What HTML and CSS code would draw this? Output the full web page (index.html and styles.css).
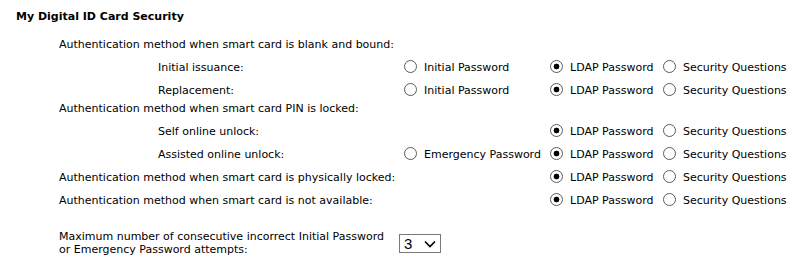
FILE: index.html
```html
<!DOCTYPE html>
<html>
<head>
<meta charset="utf-8">
<link rel="stylesheet" href="styles.css">
</head>
<body>
<div class="page">
  <div class="title">My Digital ID Card Security</div>
  <div class="grid">
    <div class="row">
      <div class="label">Authentication method when smart card is blank and bound:</div>
    </div>
    <div class="row">
      <div class="label sub">Initial issuance:</div>
      <label class="opt c1"><input type="radio" name="a"><span>Initial Password</span></label>
      <label class="opt c2"><input type="radio" name="a" checked><span>LDAP Password</span></label>
      <label class="opt c3"><input type="radio" name="a"><span>Security Questions</span></label>
    </div>
    <div class="row">
      <div class="label sub">Replacement:</div>
      <label class="opt c1"><input type="radio" name="b"><span>Initial Password</span></label>
      <label class="opt c2"><input type="radio" name="b" checked><span>LDAP Password</span></label>
      <label class="opt c3"><input type="radio" name="b"><span>Security Questions</span></label>
    </div>
    <div class="row head2">
      <div class="label">Authentication method when smart card PIN is locked:</div>
    </div>
    <div class="row">
      <div class="label sub">Self online unlock:</div>
      <label class="opt c2"><input type="radio" name="c" checked><span>LDAP Password</span></label>
      <label class="opt c3"><input type="radio" name="c"><span>Security Questions</span></label>
    </div>
    <div class="row">
      <div class="label sub">Assisted online unlock:</div>
      <label class="opt c1"><input type="radio" name="d"><span>Emergency Password</span></label>
      <label class="opt c2"><input type="radio" name="d" checked><span>LDAP Password</span></label>
      <label class="opt c3"><input type="radio" name="d"><span>Security Questions</span></label>
    </div>
    <div class="row">
      <div class="label">Authentication method when smart card is physically locked:</div>
      <label class="opt c2"><input type="radio" name="e" checked><span>LDAP Password</span></label>
      <label class="opt c3"><input type="radio" name="e"><span>Security Questions</span></label>
    </div>
    <div class="row">
      <div class="label">Authentication method when smart card is not available:</div>
      <label class="opt c2"><input type="radio" name="f" checked><span>LDAP Password</span></label>
      <label class="opt c3"><input type="radio" name="f"><span>Security Questions</span></label>
    </div>
  </div>
  <div class="maxrow">
    <div class="maxlabel">Maximum number of consecutive incorrect Initial Password<br>or Emergency Password attempts:</div>
    <div class="selwrap">
      <select class="sel"><option>3</option></select>
      <svg class="chev" width="12" height="8" viewBox="0 0 12 8"><path d="M1 1.5 L6 6.5 L11 1.5" fill="none" stroke="#000" stroke-width="1.6"/></svg>
    </div>
  </div>
</div>
</body>
</html>
```

FILE: styles.css
```css
html, body {
  margin: 0;
  padding: 0;
  background: #fff;
}
body {
  font-family: Verdana, "DejaVu Sans", sans-serif;
  font-size: 11px;
  color: #000;
}
.page {
  padding: 10px 0 0 16px;
}
.title {
  font-weight: bold;
  line-height: 13px;
  height: 13px;
}
.grid {
  margin-top: 10px;
  display: flex;
  flex-direction: column;
}
.row {
  display: grid;
  grid-template-columns: 388px 146px 113px auto;
  height: 23px;
  align-items: center;
  line-height: 13px;
}
.row.head2 {
  height: 18px;
  align-items: start;
}
.row.head2 .label {
  margin-top: 0px;
}
.label {
  grid-column: 1;
  padding-left: 43px;
  white-space: nowrap;
}
.label.sub {
  padding-left: 142px;
}
.opt {
  display: flex;
  align-items: center;
  white-space: nowrap;
}
.c1 { grid-column: 2; }
.c2 { grid-column: 3; }
.c3 { grid-column: 4; }
.opt input {
  appearance: none;
  -webkit-appearance: none;
  width: 13px;
  height: 13px;
  margin: -2px 7px 0 0;
  border: 1px solid #5a5a5a;
  border-radius: 50%;
  background: #fff;
  box-sizing: border-box;
  flex: none;
}
.opt input:checked {
  background: radial-gradient(circle, #000 0, #000 2.6px, #fff 3.2px);
}
.maxrow {
  display: flex;
  align-items: center;
  margin-top: 17px;
  height: 28px;
}
.maxlabel {
  width: 340px;
  padding-left: 43px;
  line-height: 13px;
  white-space: nowrap;
}
.selwrap {
  position: relative;
  width: 42px;
  height: 19px;
}
.sel {
  appearance: none;
  -webkit-appearance: none;
  width: 42px;
  height: 19px;
  margin: 0;
  border: 1px solid #7a7a7a;
  border-radius: 0;
  background: #fff;
  padding: 0 0 0 4px;
  font-family: "Liberation Sans", Arial, sans-serif;
  font-size: 15px;
  color: #000;
  box-sizing: border-box;
}
.chev {
  position: absolute;
  left: 25px;
  top: 6px;
  pointer-events: none;
}
```
